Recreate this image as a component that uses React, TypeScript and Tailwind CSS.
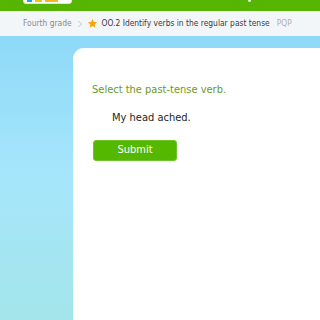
export default function App() {
  return (
    <div className="flex h-[320px] w-[320px] flex-col overflow-hidden font-['DejaVu_Sans_Condensed','DejaVu_Sans',sans-serif]">
      {/* top bar */}
      <div className="relative h-[11px] shrink-0 bg-[#55b500]">
        <div className="absolute left-[23px] top-[-6px] flex h-[10px] w-[49px] items-end gap-[3px] rounded-[3px] border border-[#e3e3e3] bg-white px-[3px] pb-[1px]">
          <div className="h-[4px] w-[5px] bg-[#1ba3e8]" />
          <div className="h-[4px] w-[7px] bg-[#f5c300]" />
          <div className="h-[4px] w-[13px] bg-[#f6b81e]" />
        </div>
        <div className="absolute left-[248px] top-0 h-[2px] w-[3px] rounded-b-full bg-[#dff2c8]" />
      </div>

      {/* breadcrumb */}
      <div className="flex h-[25px] shrink-0 items-center bg-[#f3f6f8] pl-[23px] text-[8.4px] whitespace-nowrap">
        <span className="text-[#8a8a8a]">Fourth grade</span>
        <svg width="6" height="8" viewBox="0 0 6 8" className="ml-[5px] shrink-0">
          <path d="M1.5 1 L4.5 4 L1.5 7" fill="none" stroke="#c4c4c4" strokeWidth="1" />
        </svg>
        <svg width="11" height="11" viewBox="0 0 24 24" className="ml-[4px] shrink-0">
          <path
            d="M12 2 L15 8.6 L22 9.3 L16.7 14 L18.2 21 L12 17.3 L5.8 21 L7.3 14 L2 9.3 L9 8.6 Z"
            fill="#f7a600"
          />
        </svg>
        <span className="ml-[4px] text-[#3b3b3b]">OO.2 Identify verbs in the regular past tense</span>
        <span className="ml-[7px] text-[#b0b0b0]">PQP</span>
      </div>

      {/* main */}
      <div className="flex flex-1 bg-gradient-to-b from-[#8ed9f8] via-[#a6e6fb] to-[#a3e5ea] pl-[73px] pt-[12px]">
        <div className="flex-1 rounded-tl-[11px] bg-white pl-[19px] pt-[35px]">
          <div className="text-[11px] leading-[14px] text-[#6b9a1c]">Select the past-tense verb.</div>
          <div className="mt-[14px] pl-[20px] text-[11px] leading-[14px] text-[#1e1e1e]">My head ached.</div>
          <button className="mt-[15px] ml-[1px] h-[21px] w-[84px] rounded-[3px] border border-[#6cc52c] bg-[#55b800] text-[11px] text-white">
            Submit
          </button>
        </div>
      </div>
    </div>
  );
}
